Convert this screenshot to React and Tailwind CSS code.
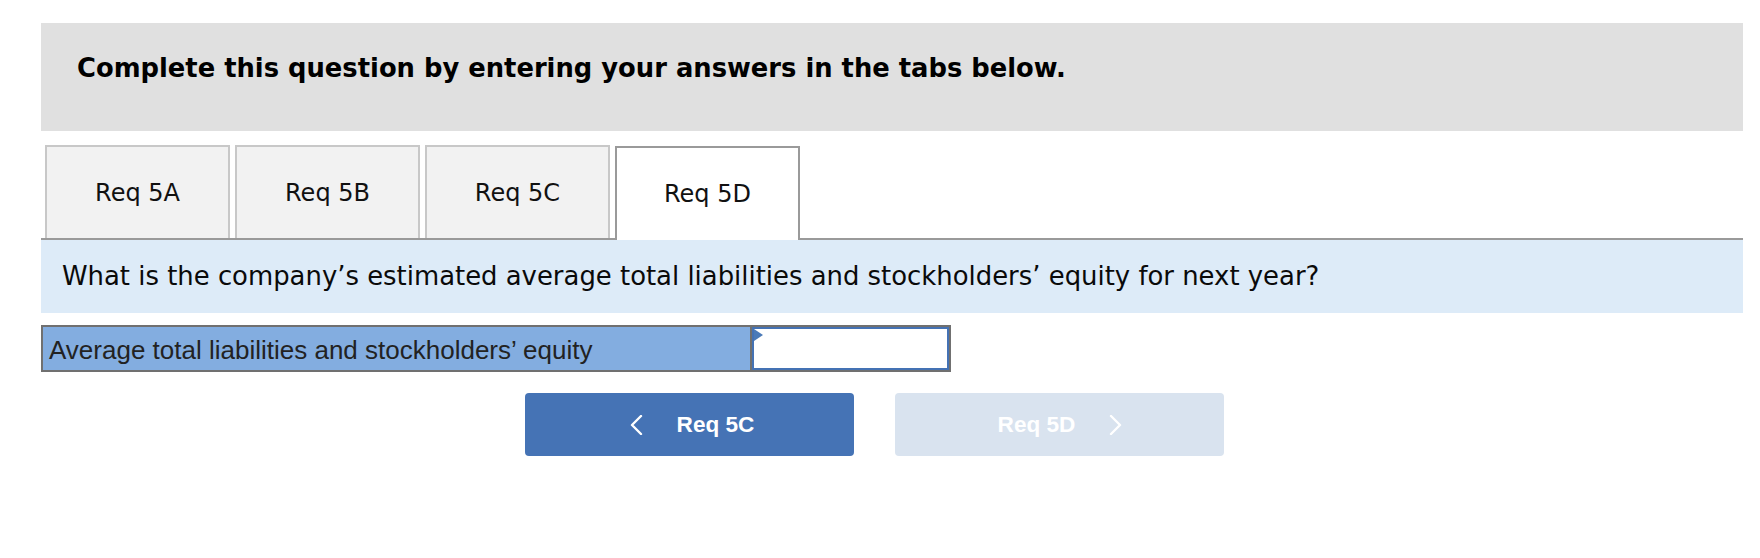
import React from 'react'

const verdana = { fontFamily: '"DejaVu Sans", Verdana, sans-serif' }
const arial = { fontFamily: '"Liberation Sans", Arial, sans-serif' }

const tabs = ['Req 5A', 'Req 5B', 'Req 5C', 'Req 5D']

function Chevron({ dir }) {
  return (
    <svg width="14" height="20" viewBox="0 0 14 20" fill="none" className="shrink-0">
      <polyline
        points={dir === 'left' ? '12,1 3,10 12,19' : '2,1 11,10 2,19'}
        stroke="white"
        strokeWidth="2.4"
        strokeLinecap="round"
        strokeLinejoin="round"
      />
    </svg>
  )
}

export default function App() {
  return (
    <div className="w-[1760px] h-[558px] bg-white pl-[41px] pr-[17px] pt-[23px]">
      <div className="h-[108px] bg-[#e0e0e0] pl-[36px] pt-[30px]">
        <p className="text-[25.8px] leading-[30px] font-bold text-black" style={verdana}>
          Complete this question by entering your answers in the tabs below.
        </p>
      </div>

      <div className="mt-[14px] flex items-end gap-[5px] pl-[4px] h-[95px] border-b-2 border-[#9a9a9a]">
        {tabs.map((t, i) => {
          const active = i === tabs.length - 1
          return (
            <div
              key={t}
              className={
                active
                  ? 'w-[185px] h-[94px] -mb-[2px] bg-white border-2 border-b-0 border-[#9a9a9a] flex items-center justify-center'
                  : 'w-[185px] h-[93px] bg-[#f2f2f2] border-2 border-b-0 border-[#c8c8c8] flex items-center justify-center'
              }
            >
              <span className="text-[24px] text-[#111]" style={verdana}>{t}</span>
            </div>
          )
        })}
      </div>

      <div className="h-[73px] bg-[#ddebf8] flex items-center pl-[21px]">
        <p className="text-[25.9px] text-[#0a0a0a]" style={verdana}>
          What is the company’s estimated average total liabilities and stockholders’ equity for next year?
        </p>
      </div>

      <div className="mt-[12px] w-[910px] h-[47px] flex border-2 border-[#707070]">
        <div className="w-[709px] bg-[#83ade0] border-r-2 border-[#707070] flex items-center pl-[6px] pt-[3px]">
          <span className="text-[26px] text-[#222]" style={arial}>
            Average total liabilities and stockholders’ equity
          </span>
        </div>
        <div className="relative flex-1 bg-white border-2 border-[#4472b4]">
          <div className="absolute left-0 top-0 w-0 h-0 border-y-[6px] border-y-transparent border-l-[9px] border-l-[#4a7ab8]" />
        </div>
      </div>

      <div className="mt-[21px] flex gap-[41px] pl-[484px]" style={arial}>
        <button className="w-[329px] h-[63px] rounded-[4px] bg-[#4573b5] flex items-center justify-center gap-[34px] pl-[4px]">
          <Chevron dir="left" />
          <span className="text-[22.6px] font-bold text-white">Req 5C</span>
        </button>
        <button className="w-[329px] h-[63px] rounded-[4px] bg-[#d9e3ef] flex items-center justify-center gap-[34px] pl-[2px]">
          <span className="text-[22.6px] font-bold text-white">Req 5D</span>
          <Chevron dir="right" />
        </button>
      </div>
    </div>
  )
}
